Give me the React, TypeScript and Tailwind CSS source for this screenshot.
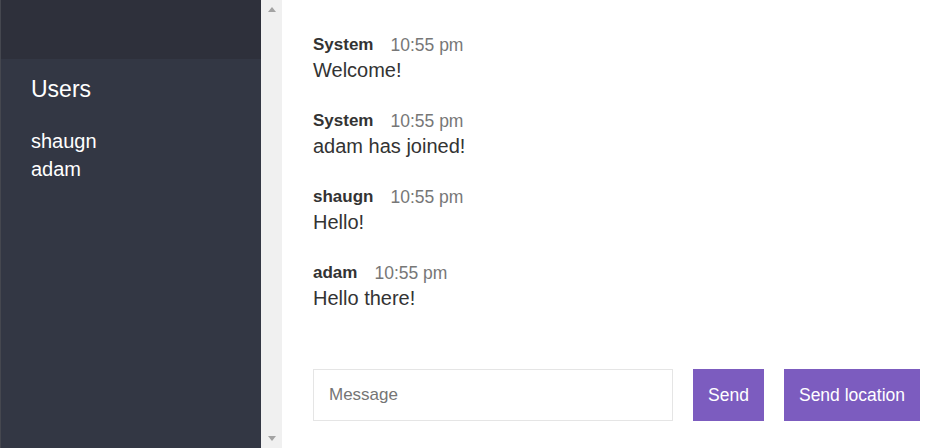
const messages = [
  { name: "System", time: "10:55 pm", text: "Welcome!" },
  { name: "System", time: "10:55 pm", text: "adam has joined!" },
  { name: "shaugn", time: "10:55 pm", text: "Hello!" },
  { name: "adam", time: "10:55 pm", text: "Hello there!" },
];

const users = ["shaugn", "adam"];

export default function App() {
  return (
    <div
      className="flex h-[448px] w-[926px] overflow-hidden bg-white text-[#333]"
      style={{ fontFamily: '"Liberation Sans", Arial, sans-serif' }}
    >
      {/* Sidebar */}
      <aside className="flex w-[261px] shrink-0 flex-col border-l border-[#45474f] bg-[#333744] text-white">
        <div className="h-[59px] bg-[#2e303b]" />
        <div className="px-[30px] pt-[16px]">
          <h3 className="text-[23px] leading-[28px]">Users</h3>
          <ul className="mt-[24px] text-[20px] leading-[28px]">
            {users.map((u) => (
              <li key={u}>{u}</li>
            ))}
          </ul>
        </div>
      </aside>

      {/* Scrollbar */}
      <div className="flex w-[21px] shrink-0 flex-col items-center justify-between bg-[#f0f0f0] py-[7px]">
        <div className="h-0 w-0 border-x-[4.5px] border-b-[5px] border-x-transparent border-b-[#a3a3a3]" />
        <div className="h-0 w-0 border-x-[4.5px] border-t-[5px] border-x-transparent border-t-[#a3a3a3]" />
      </div>

      {/* Chat */}
      <main className="flex flex-1 flex-col">
        <ol className="flex-1 pl-[31px] pt-[33px]">
          {messages.map((m, i) => (
            <li key={i} className="mb-[26px]">
              <p className="flex text-[17px] leading-[24px]">
                <span className="mr-[17px] font-bold text-[#333]">{m.name}</span>
                <span className="text-[17.5px] text-[#777]">{m.time}</span>
              </p>
              <p className="text-[20px] leading-[26px] text-[#333]">{m.text}</p>
            </li>
          ))}
        </ol>

        <div className="flex gap-[20px] pb-[27px] pl-[31px] pr-[6px]">
          <input
            placeholder="Message"
            className="h-[52px] flex-1 border border-[#e5e5e5] px-[15px] text-[17px] text-[#333] outline-none placeholder:text-[#757575]"
          />
          <button className="h-[52px] w-[71px] bg-[#7c5cbf] text-[17.5px] text-white">Send</button>
          <button className="h-[52px] w-[136px] bg-[#7c5cbf] text-[17.5px] text-white">Send location</button>
        </div>
      </main>
    </div>
  );
}
